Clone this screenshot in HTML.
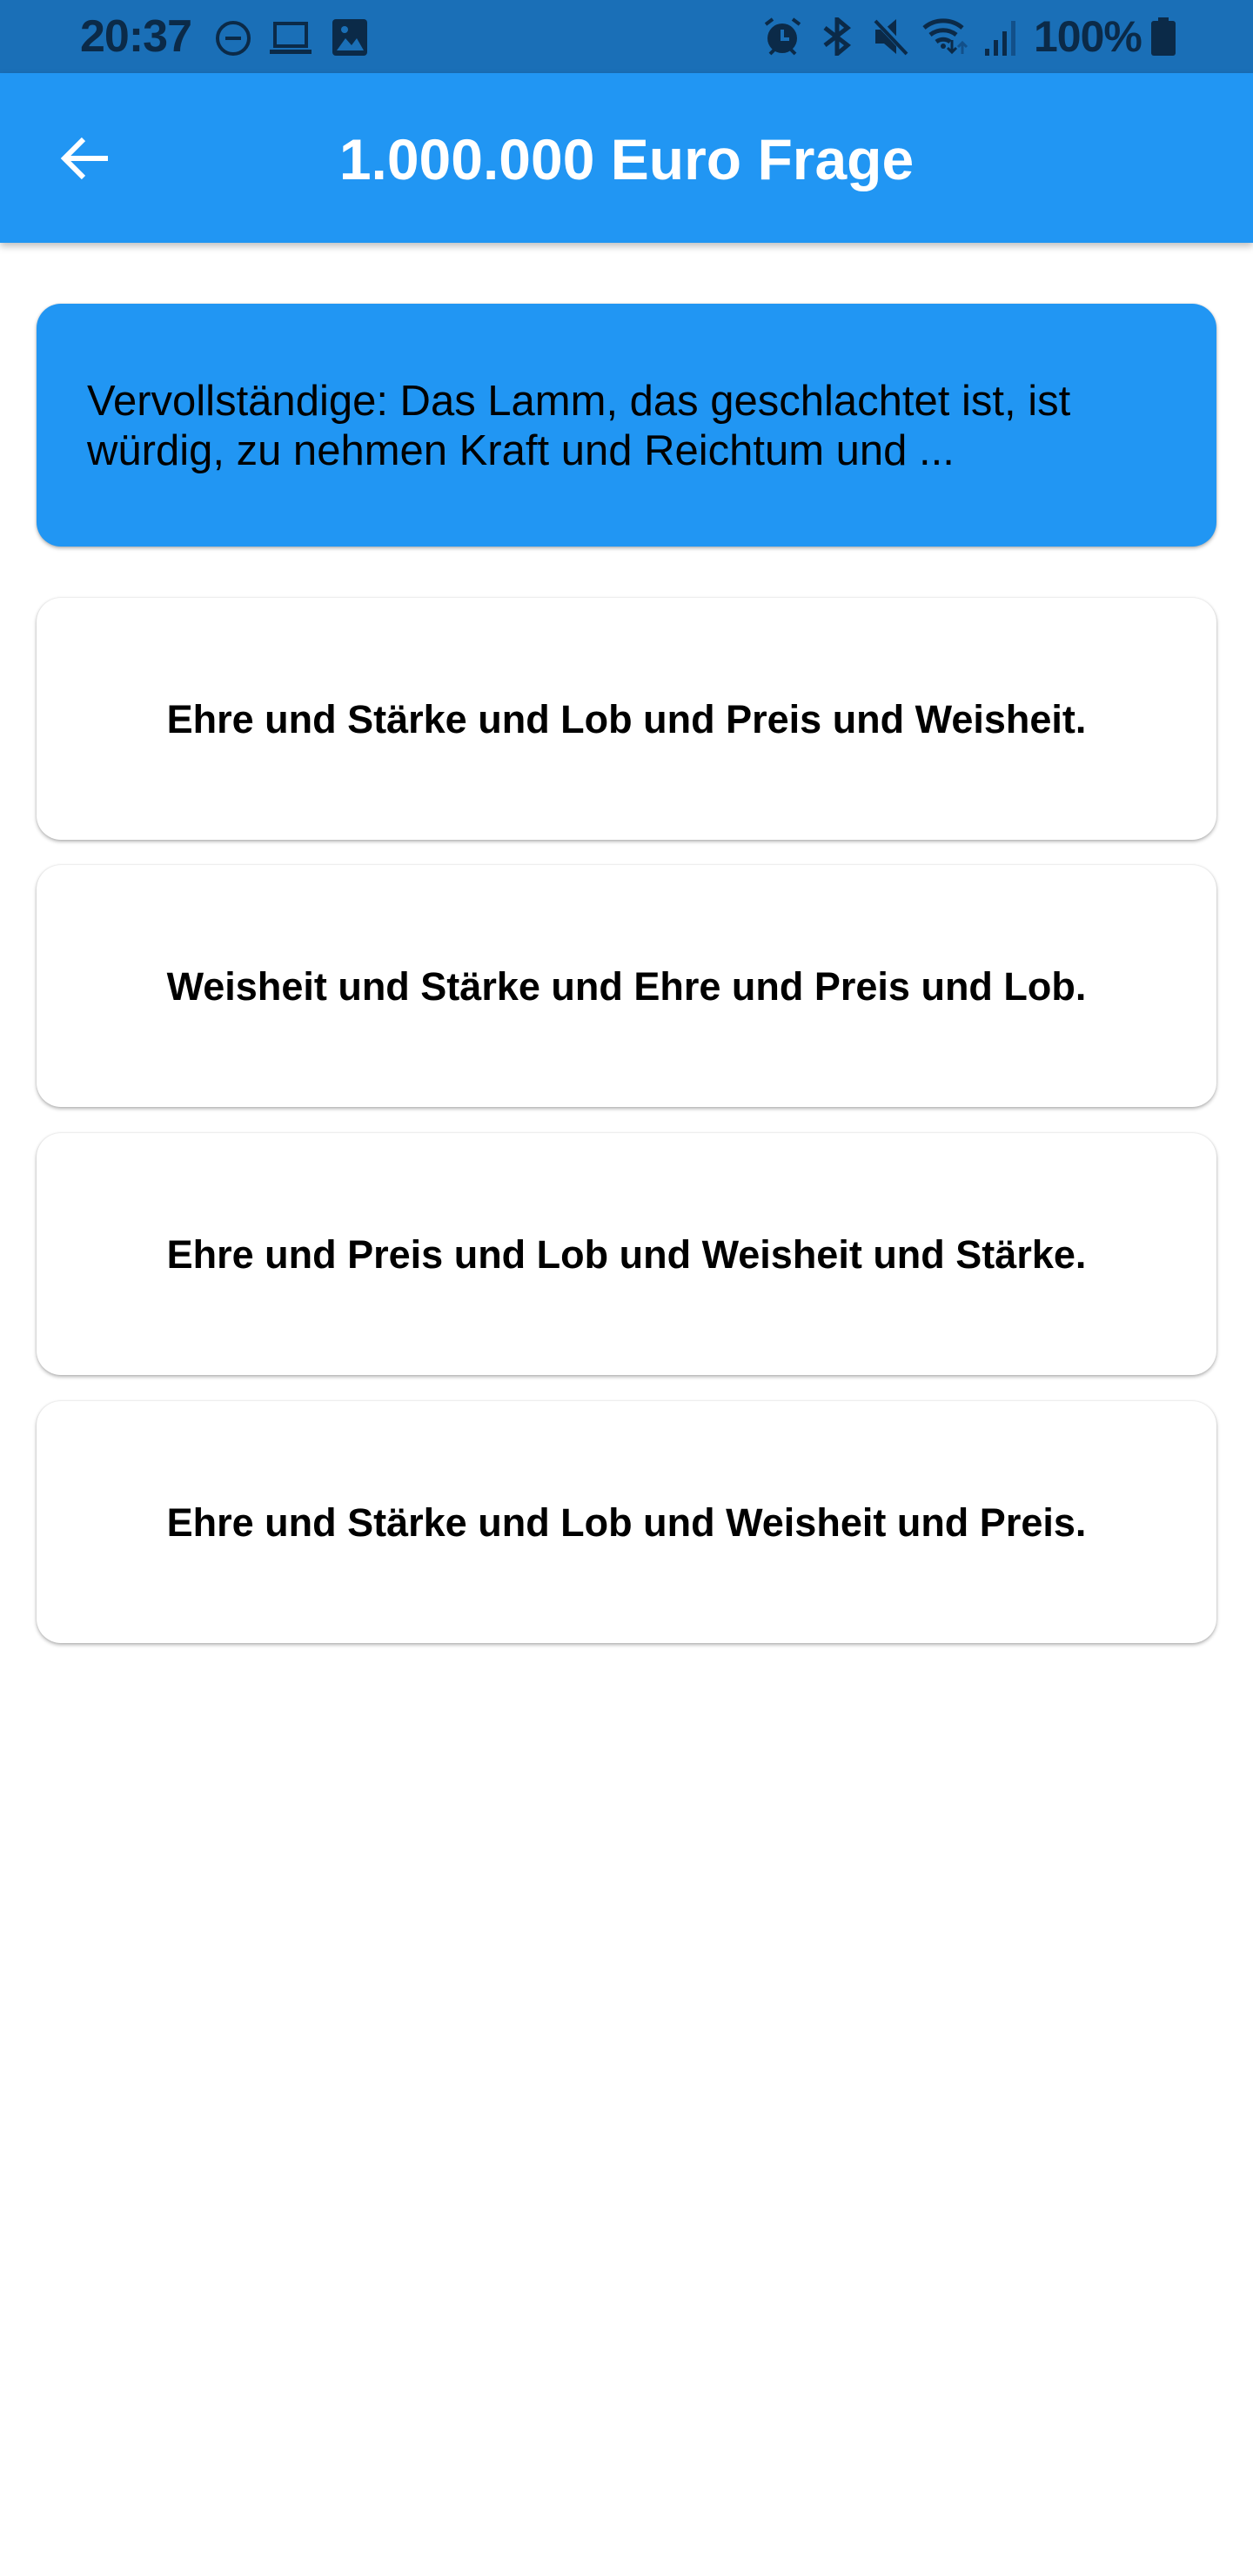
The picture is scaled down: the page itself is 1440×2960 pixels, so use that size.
<!DOCTYPE html>
<html><head><meta charset="utf-8"><style>
*{margin:0;padding:0;box-sizing:border-box}
body{width:1440px;height:2960px;background:#fff;font-family:"Liberation Sans",sans-serif;position:relative;overflow:hidden}
.sb{position:absolute;left:0;top:0;width:1440px;height:84px;background:#1a6fb7}
.sbt{position:absolute;top:14px;font-weight:bold;font-size:52px;color:#0b2a48;letter-spacing:-1px;line-height:56px}
.ab{position:absolute;left:0;top:84px;width:1440px;height:195px;background:#2196f3;box-shadow:0 4px 8px rgba(0,0,0,.25)}
.title{position:absolute;left:0;width:1440px;top:145px;text-align:center;color:#fff;font-size:66px;font-weight:bold;line-height:76px}
.card{position:absolute;left:42px;width:1356px;border-radius:28px;box-shadow:0 2px 4px rgba(0,0,0,.3),0 0 2px rgba(0,0,0,.1)}
.q{top:349px;height:279px;background:#2196f3}
.qt{position:absolute;left:58px;top:84px;font-size:49px;line-height:57px;color:#000;width:1180px}
.a{height:278px;background:#fff;display:flex;align-items:center;justify-content:center;font-weight:bold;font-size:45px;color:#000;padding-top:2px}
</style></head><body>
<div class="sb">
<div class="sbt" style="left:92px">20:37</div>
<svg style="position:absolute;left:246px;top:22px" width="44" height="44" viewBox="0 0 44 44"><circle cx="22" cy="22" r="18" fill="none" stroke="#0b2a48" stroke-width="4"/><rect x="13" y="20" width="18" height="4" fill="#0b2a48"/></svg>
<svg style="position:absolute;left:310px;top:24px" width="48" height="40" viewBox="0 0 48 40"><rect x="6" y="3" width="36" height="26" fill="none" stroke="#0b2a48" stroke-width="4"/><rect x="0" y="33" width="48" height="5" fill="#0b2a48"/></svg>
<svg style="position:absolute;left:382px;top:22px" width="40" height="42" viewBox="0 0 40 42"><rect x="0" y="0" width="40" height="42" rx="4" fill="#0b2a48"/><path d="M5 36 L15 22 L22 30 L28 22 L36 36Z" fill="#1a6fb7"/><circle cx="14" cy="12" r="4" fill="#1a6fb7"/></svg>
<svg style="position:absolute;left:877px;top:20px" width="45" height="44" viewBox="0 0 45 44"><circle cx="22" cy="24" r="17" fill="#0b2a48"/><path d="M22 14v11h8" stroke="#1a6fb7" stroke-width="4" fill="none"/><path d="M3 8l8-6M42 8l-8-6M8 42l5-5M37 42l-5-5" stroke="#0b2a48" stroke-width="4"/></svg>
<svg style="position:absolute;left:942px;top:20px" width="40" height="44" viewBox="0 0 40 44"><path d="M6 12l26 20-12 10V2l12 10L6 32" stroke="#0b2a48" stroke-width="5" fill="none"/></svg>
<svg style="position:absolute;left:1004px;top:20px" width="42" height="44" viewBox="0 0 42 44"><path d="M2 14h10L26 2v40L12 30H2z" fill="#0b2a48"/><path d="M4 4l34 36" stroke="#1a6fb7" stroke-width="8"/><path d="M2 4l36 38" stroke="#0b2a48" stroke-width="4"/></svg>
<svg style="position:absolute;left:1060px;top:20px" width="58" height="44" viewBox="0 0 58 44"><path d="M2 12a34 34 0 0 1 44 0M9 20a24 24 0 0 1 30 0M16 28a13 13 0 0 1 16 0" stroke="#0b2a48" stroke-width="5" fill="none"/><circle cx="24" cy="33" r="3" fill="#0b2a48"/><path d="M34 26v14M29 35l5 5 5-5" stroke="#0b2a48" stroke-width="3" fill="none"/><path d="M46 42V30M41 34l5-5 5 5" stroke="#12508a" stroke-width="3" fill="none"/></svg>
<svg style="position:absolute;left:1130px;top:22px" width="40" height="42" viewBox="0 0 40 42"><rect x="2" y="34" width="5" height="8" fill="#0b2a48"/><rect x="12" y="24" width="5" height="18" fill="#0b2a48"/><rect x="22" y="14" width="5" height="28" fill="#0b2a48"/><rect x="32" y="2" width="5" height="40" fill="#12508a"/></svg>
<div class="sbt" style="left:1188px;font-size:50px;letter-spacing:-1px">100%</div>
<svg style="position:absolute;left:1322px;top:20px" width="30" height="44" viewBox="0 0 30 44"><rect x="9" y="0" width="12" height="5" fill="#0b2a48"/><rect x="1" y="4" width="28" height="40" rx="3" fill="#0b2a48"/></svg>
</div>
<div class="ab">
<svg style="position:absolute;left:68px;top:70px" width="60" height="56" viewBox="0 0 60 56"><path d="M56 28H8M28 6L6 28l22 22" stroke="#fff" stroke-width="6" fill="none"/></svg>
</div>
<div class="title">1.000.000 Euro Frage</div>
<div class="card q"><div class="qt">Vervollständige: Das Lamm, das geschlachtet ist, ist würdig, zu nehmen Kraft und Reichtum und ...</div></div>
<div class="card a" style="top:687px">Ehre und Stärke und Lob und Preis und Weisheit.</div>
<div class="card a" style="top:994px">Weisheit und Stärke und Ehre und Preis und Lob.</div>
<div class="card a" style="top:1302px">Ehre und Preis und Lob und Weisheit und Stärke.</div>
<div class="card a" style="top:1610px">Ehre und Stärke und Lob und Weisheit und Preis.</div>
</body></html>
